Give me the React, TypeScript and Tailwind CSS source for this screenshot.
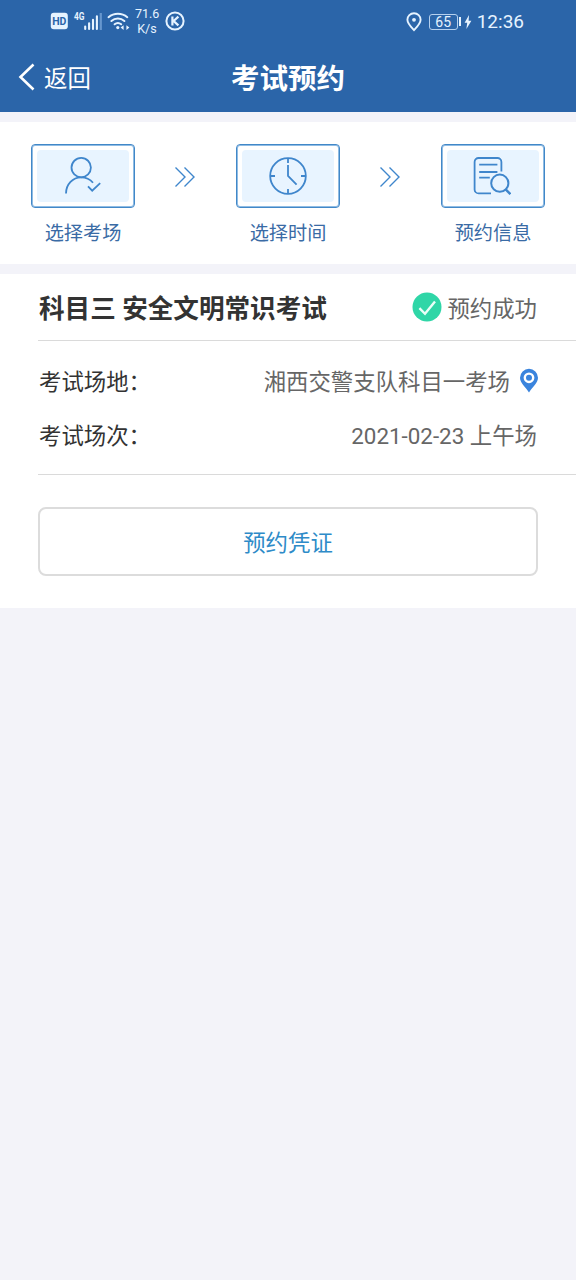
import type { ReactNode } from "react";

const UserIcon = () => (
  <svg width="36" height="38" viewBox="0 0 36 38" fill="none" stroke="#3f86cc" strokeWidth="1.8" className="ml-[-1px]">
    <circle cx="16.2" cy="10.6" r="9.7" />
    <path d="M1 36.6C1 27.2 8 20.4 16 20.4c5 0 9.2 2 12 5.4" />
    <path d="M23 29.4l4.2 4.3 8-7.6" />
  </svg>
);

const ClockIcon = () => (
  <svg width="38" height="38" viewBox="0 0 38 38" fill="none" stroke="#3f86cc" strokeWidth="1.8" className="ml-[-1px]">
    <circle cx="19" cy="19" r="17.8" />
    <path d="M19 1v5M19 32v5M1 19h5M32 19h5M19 8v11l8.6 8.6" />
  </svg>
);

const RecordIcon = () => (
  <svg width="38" height="38" viewBox="0 0 38 38" fill="none" stroke="#3f86cc" strokeWidth="1.8" className="ml-[-2px]">
    <path d="M28.4 14.5V5a4 4 0 0 0-4-4H5.6a4 4 0 0 0-4 4v27.4a4 4 0 0 0 4 4H18" />
    <path d="M6.2 7.6h18.2M6.2 15h18.2M6.2 20.6h10.6" />
    <circle cx="26.8" cy="26.2" r="8.6" strokeWidth="2" />
    <path d="M32.4 32.2l5 5" strokeWidth="2.4" />
  </svg>
);

const Arrows = () => (
  <svg width="22" height="22" viewBox="0 0 22 22" fill="none" stroke="#3f86cc" strokeWidth="1.4" className="-ml-[2px] mt-[22px]">
    <path d="M1.5 1.5l9.5 9.5-9.5 9.5M10.5 1.5l9.5 9.5-9.5 9.5" />
  </svg>
);

const Step = ({ icon, label }: { icon: ReactNode; label: string }) => (
  <div className="flex w-[104px] flex-col items-center">
    <div className="h-16 w-[104px] rounded-[4px] border border-[#4288c8] p-[5px] shadow-[inset_0_0_0_1px_#8fbce4]">
      <div className="flex h-full items-center justify-center rounded-[4px] bg-[#e8f4ff]">{icon}</div>
    </div>
    <span className="mt-[12px] text-[19.2px] leading-7 text-[#3a6ba5]">{label}</span>
  </div>
);

const StatusBar = () => (
  <div className="flex h-[43px] items-center justify-between pr-[51px] pl-[50px] text-[#e6f3ff]">
    <div className="flex items-center pb-px">
      <svg width="18" height="18" viewBox="0 0 18 18">
        <rect x="0.8" y="0.8" width="17" height="16.4" rx="3" fill="#e6f3ff" />
        <text x="9.3" y="13" textAnchor="middle" fontSize="10.5" fontWeight="700" fill="#2b65a9" className="font-[Roboto,sans-serif]">
          HD
        </text>
      </svg>
      <svg width="30" height="28" viewBox="0 -4 30 28" className="ml-[5px]">
        <text x="1" y="8.6" fontSize="10.5" fontWeight="700" fill="#e6f3ff" textLength="10.5" lengthAdjust="spacingAndGlyphs" className="font-[Roboto,sans-serif]">
          4G
        </text>
        <path d="M12.2 15.6v2.4M16.1 12.2V18M20 8.8V18M23.9 5.2V18" stroke="#e6f3ff" strokeWidth="2.1" strokeLinecap="round" />
        <path d="M27.8 2v17" stroke="#6797ce" strokeWidth="2.2" />
      </svg>
      <svg width="23" height="20" viewBox="0 0 23 20" fill="none" stroke="#e6f3ff" strokeWidth="2" strokeLinecap="round" className="ml-[4px]">
        <path d="M1.5 6.2a14.6 14.6 0 0 1 18.8 0M4.4 10a10 10 0 0 1 13 0M7.6 13.3a5.2 5.2 0 0 1 6.6 0" />
        <circle cx="10.8" cy="16.6" r="1.6" fill="#e6f3ff" stroke="none" />
        <path d="M13.6 16.6l3-2.4v4.8zM22.4 16.6l-3-2.4v4.8z" fill="#e6f3ff" stroke="none" />
      </svg>
      <div className="ml-[5px] w-6 text-center text-[12.5px] leading-[15px]">
        <div>71.6</div>
        <div>K/s</div>
      </div>
      <svg width="20" height="20" viewBox="0 0 20 20" fill="none" stroke="#e6f3ff" strokeWidth="2" className="ml-[6px]">
        <circle cx="10" cy="10" r="8.6" />
        <path d="M7.4 5.4v9.2M13.4 5.6L8.6 10l4.8 4.4" strokeWidth="2.2" />
      </svg>
    </div>
    <div className="flex items-center">
      <svg width="16" height="20" viewBox="0 0 16 20" fill="none" stroke="#e6f3ff" strokeWidth="1.9">
        <path d="M8 18.2C4.6 14.6 1.4 11.4 1.4 7.8a6.6 6.6 0 0 1 13.2 0c0 3.6-3.2 6.8-6.6 10.4z" />
        <circle cx="8" cy="7.8" r="1.9" fill="#e6f3ff" stroke="none" />
      </svg>
      <div className="ml-[7px] flex h-4 w-[29px] items-center justify-center rounded-[3px] border border-[#b5d0ee] text-[14px] leading-none">
        65
      </div>
      <div className="ml-px h-[9px] w-[2px] bg-[#e6f3ff]" />
      <svg width="8" height="14" viewBox="0 0 8 14" fill="#e6f3ff" className="ml-[3px]">
        <path d="M5 0L0.6 7.8h2.6L2.4 14l5-8.2H4.6z" />
      </svg>
      <span className="mr-px ml-[5px] pt-[2px] text-[19px]">12:36</span>
    </div>
  </div>
);

const Row = ({ label, children }: { label: string; children: ReactNode }) => (
  <div className="flex h-[54px] items-center justify-between text-[22.4px]">
    <span className="ml-px pt-1 text-[#333]">{label}</span>
    <div className="flex items-center text-[#666]">{children}</div>
  </div>
);

const App = () => {
  return (
    <main className="min-h-screen bg-[#f3f3f9] font-[Roboto,'Noto_Sans_CJK_SC',sans-serif]">
      <header className="h-28 bg-[#2b65a9]">
        <StatusBar />
        <nav className="grid h-[69px] grid-cols-3 items-center text-white">
          <div className="flex items-center pl-[17px]">
            <svg width="18" height="28" viewBox="0 0 18 28" fill="none" stroke="#fff" strokeWidth="2.6" className="-mt-px">
              <path d="M16.5 1.5L3.5 14l13 12.5" />
            </svg>
            <span className="ml-[9px] pt-1 text-[23.4px]">返回</span>
          </div>
          <h1 className="pt-[6px] text-center text-[28.5px] font-bold">考试预约</h1>
        </nav>
      </header>

      <section className="mt-[10px] flex h-[142px] items-start justify-between bg-white px-[31px] pt-[22px]">
        <Step icon={<UserIcon />} label="选择考场" />
        <Arrows />
        <Step icon={<ClockIcon />} label="选择时间" />
        <Arrows />
        <Step icon={<RecordIcon />} label="预约信息" />
      </section>

      <section className="mt-[10px] h-[334px] bg-white pl-[38px]">
        <div className="flex h-[67px] items-center justify-between border-b border-[#dadada] pr-[39px]">
          <h2 className="ml-px pt-1 text-[25.6px] font-bold text-[#333]">科目三 安全文明常识考试</h2>
          <div className="flex items-center">
            <svg width="30" height="30" viewBox="0 0 30 30" fill="none">
              <circle cx="15" cy="15" r="14.5" fill="#2fd6a7" />
              <path d="M7.4 16.2l5.6 5.6L23 9.6" stroke="#eafff8" strokeWidth="2.4" />
            </svg>
            <span className="ml-[5px] pt-[5px] text-[22.4px] text-[#666]">预约成功</span>
          </div>
        </div>

        <div className="h-[134px] border-b border-[#dadada] pt-[13px] pr-[39px]">
          <Row label="考试场地：">
            <span className="pt-1">湘西交警支队科目一考场</span>
            <svg width="20" height="26" viewBox="0 0 20 26" className="-mr-[2px] ml-[9px]">
              <path d="M10 24.4C6 18.6 1 14.6 1 9.8a9 9 0 0 1 18 0c0 4.8-5 8.8-9 14.6z" fill="#3a84dd" />
              <circle cx="10" cy="9.8" r="4.2" fill="#3a84dd" stroke="#fff" strokeWidth="2.4" />
            </svg>
          </Row>
          <Row label="考试场次：">
            <span className="pt-1">2021-02-23 上午场</span>
          </Row>
        </div>

        <div className="pt-8 pr-[38px]">
          <button className="h-[69px] w-full rounded-[8px] border-2 border-[#dcdcdc] pt-[5px] text-[22.4px] text-[#2e8bc8]">预约凭证</button>
        </div>
      </section>
    </main>
  );
};

export default App;
